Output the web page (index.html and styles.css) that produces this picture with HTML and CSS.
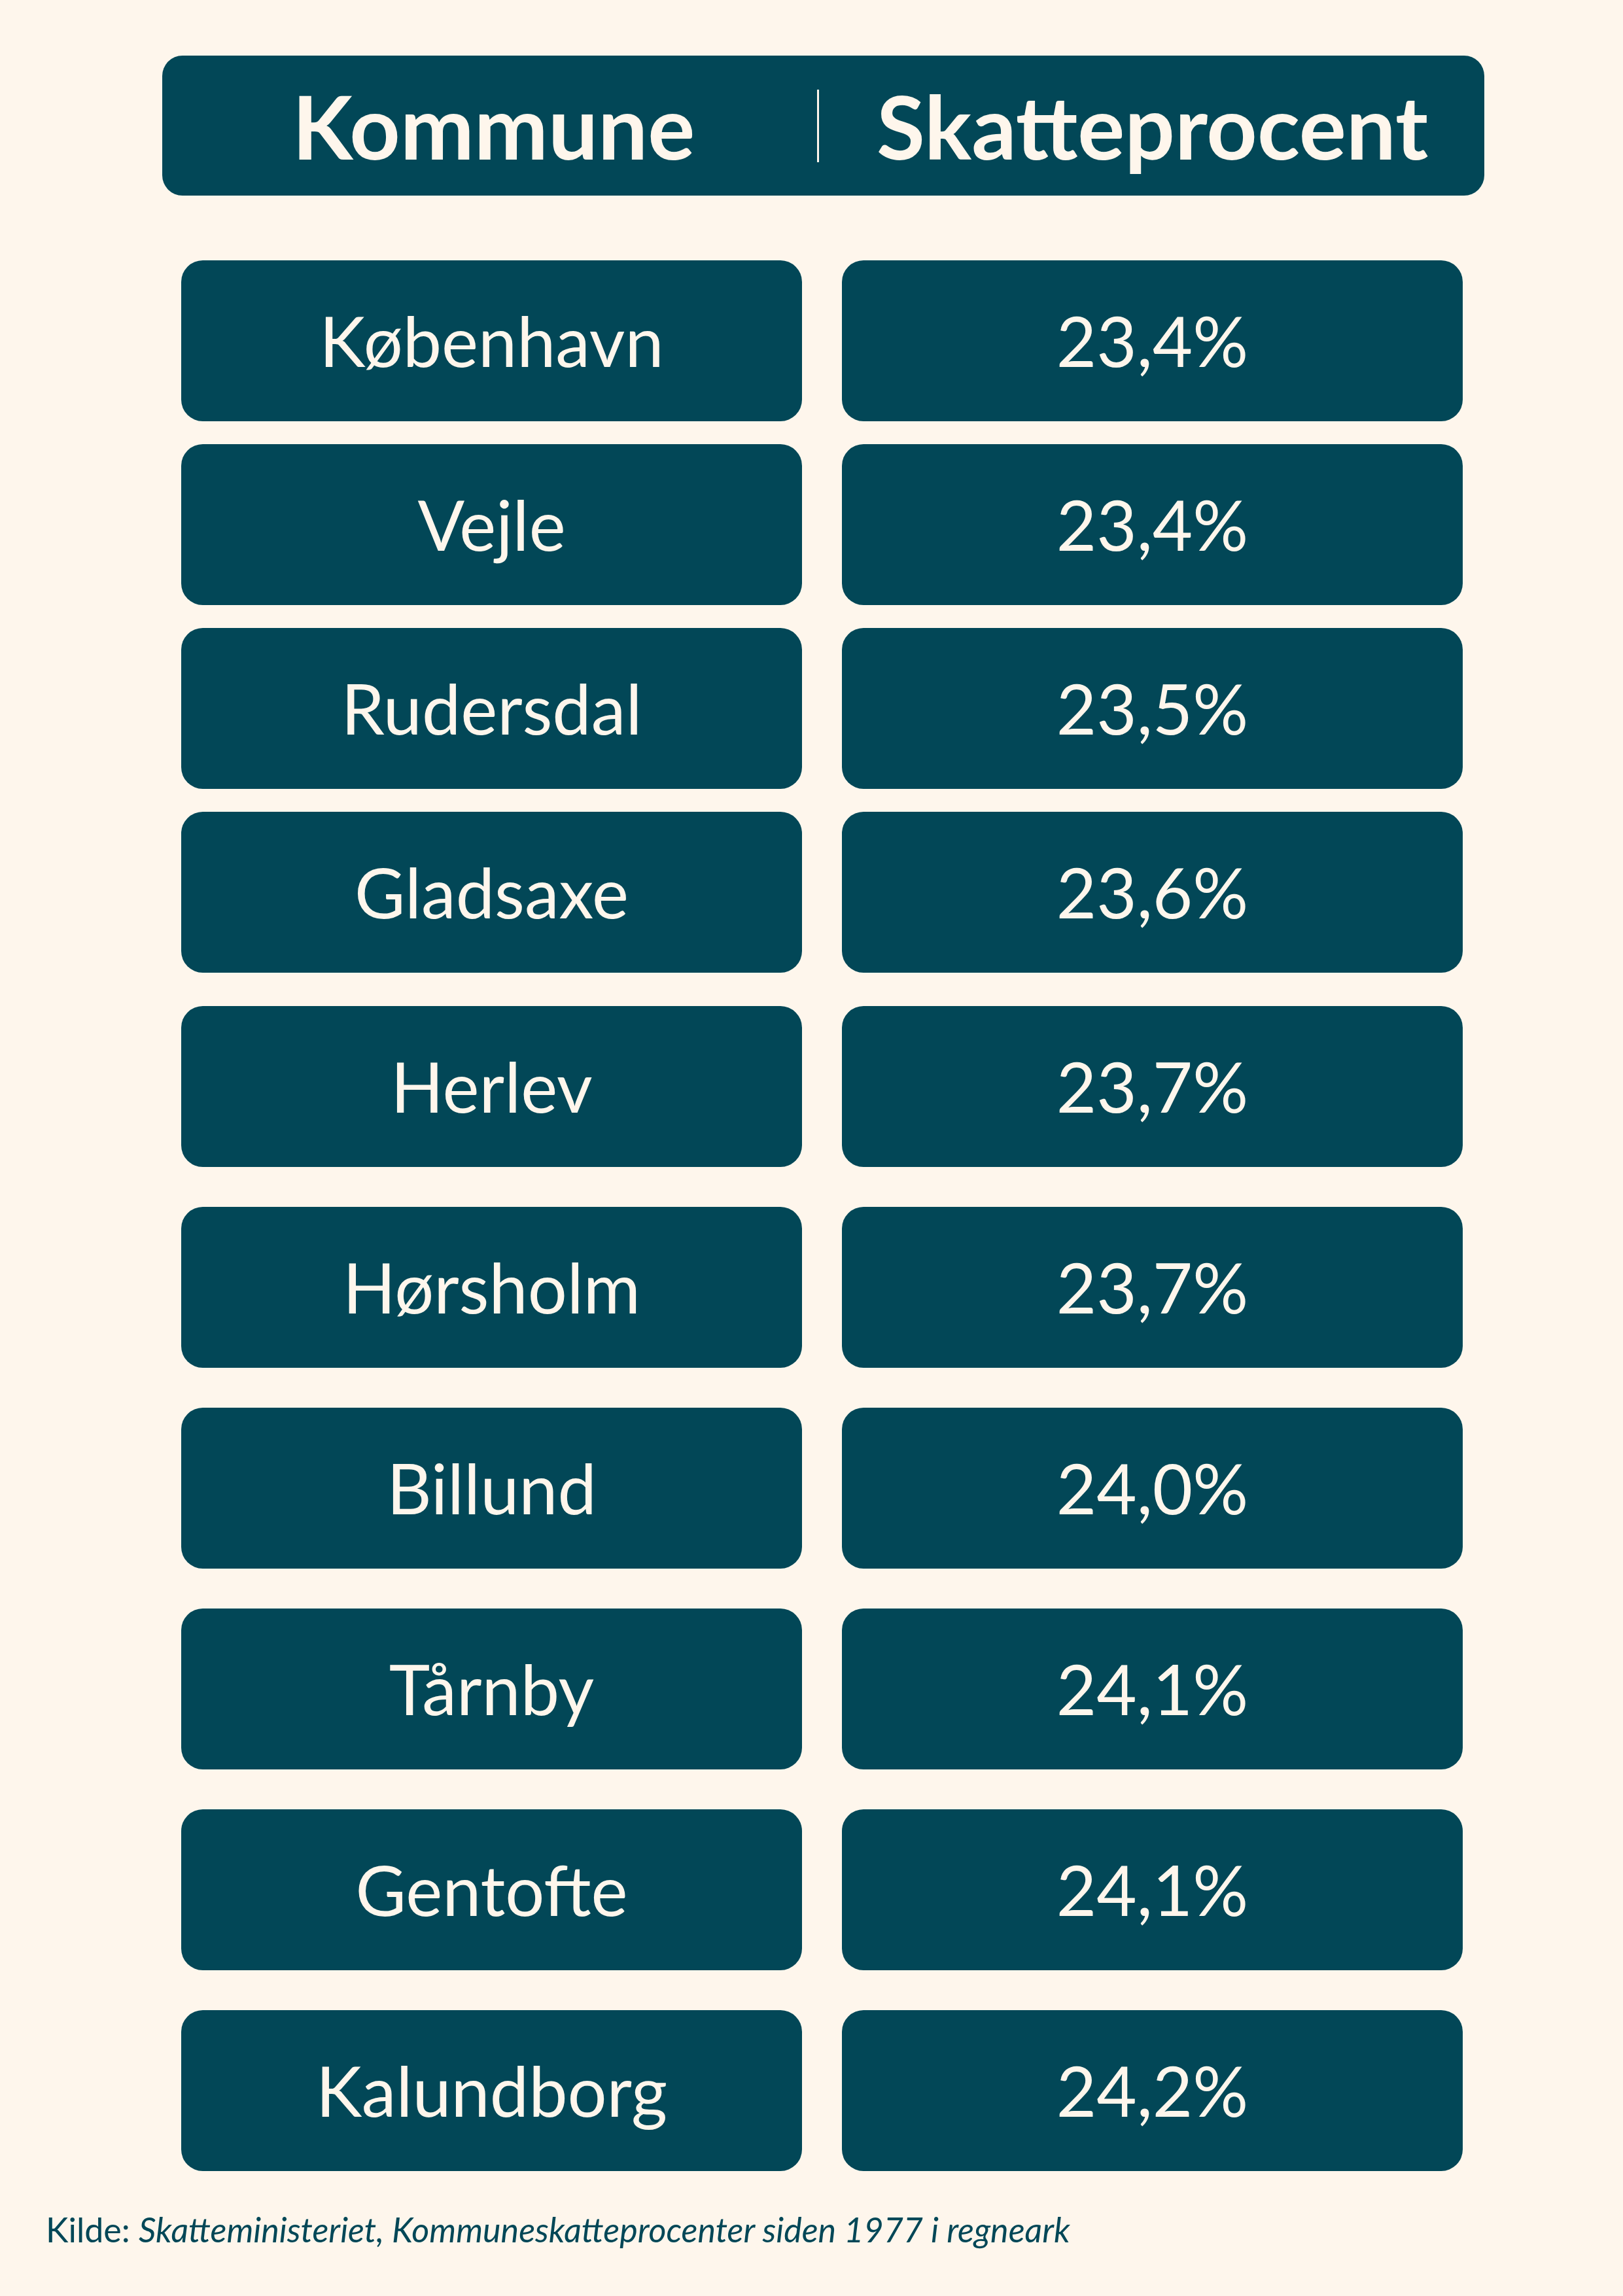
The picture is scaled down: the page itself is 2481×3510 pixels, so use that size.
FILE: index.html
```html
<!DOCTYPE html>
<html lang="da">
<head>
<meta charset="utf-8">
<title>Skatteprocent</title>
<link rel="stylesheet" href="styles.css">
</head>
<body>
<div class="page">
  <div class="header">
    <div class="head-name">Kommune</div>
    <div class="divider"></div>
    <div class="head-rate">Skatteprocent</div>
  </div>
  <div class="rows rows-a">
    <div class="row"><div class="cell">København</div><div class="cell">23,4%</div></div>
    <div class="row"><div class="cell">Vejle</div><div class="cell">23,4%</div></div>
    <div class="row"><div class="cell">Rudersdal</div><div class="cell">23,5%</div></div>
    <div class="row"><div class="cell">Gladsaxe</div><div class="cell">23,6%</div></div>
  </div>
  <div class="rows rows-b">
    <div class="row"><div class="cell">Herlev</div><div class="cell">23,7%</div></div>
    <div class="row"><div class="cell">Hørsholm</div><div class="cell">23,7%</div></div>
    <div class="row"><div class="cell">Billund</div><div class="cell">24,0%</div></div>
    <div class="row"><div class="cell">Tårnby</div><div class="cell">24,1%</div></div>
    <div class="row"><div class="cell">Gentofte</div><div class="cell">24,1%</div></div>
    <div class="row"><div class="cell">Kalundborg</div><div class="cell">24,2%</div></div>
  </div>
  <div class="footer">Kilde: <em>Skatteministeriet, Kommuneskatteprocenter siden 1977 i regneark</em></div>
</div>
</body>
</html>
```

FILE: styles.css
```css
html, body {
  margin: 0;
  padding: 0;
}
body {
  background: #fef6ec;
  font-family: Lato, "Open Sans", sans-serif;
  color: #fef6ec;
  width: 2481px;
  height: 3510px;
  overflow: hidden;
}
.page {
  padding-top: 85px;
}
.header {
  margin-left: 248px;
  width: 2021px;
  height: 214px;
  border-radius: 31px;
  background: #024757;
  display: flex;
  align-items: center;
  font-weight: 700;
  font-size: 135px;
  line-height: 1.2;
}
.head-name {
  box-sizing: border-box;
  width: 1001px;
  padding-left: 12px;
  text-align: center;
}
.divider {
  width: 3px;
  height: 111px;
  background: #fef6ec;
}
.head-rate {
  padding-left: 88px;
}
.rows {
  display: flex;
  flex-direction: column;
  margin-left: 277px;
}
.rows-a {
  margin-top: 99px;
  gap: 35px;
}
.rows-b {
  margin-top: 51px;
  gap: 61px;
}
.row {
  display: flex;
  gap: 61px;
}
.cell {
  width: 949px;
  height: 246px;
  border-radius: 33px;
  background: #024757;
  display: flex;
  align-items: center;
  justify-content: center;
  font-size: 106px;
  line-height: 1.2;
  font-weight: 400;
}
.footer {
  margin-top: 58px;
  padding-left: 70px;
  font-size: 52px;
  line-height: 1.2;
  color: #024757;
}
.footer em {
  font-style: italic;
}
```
